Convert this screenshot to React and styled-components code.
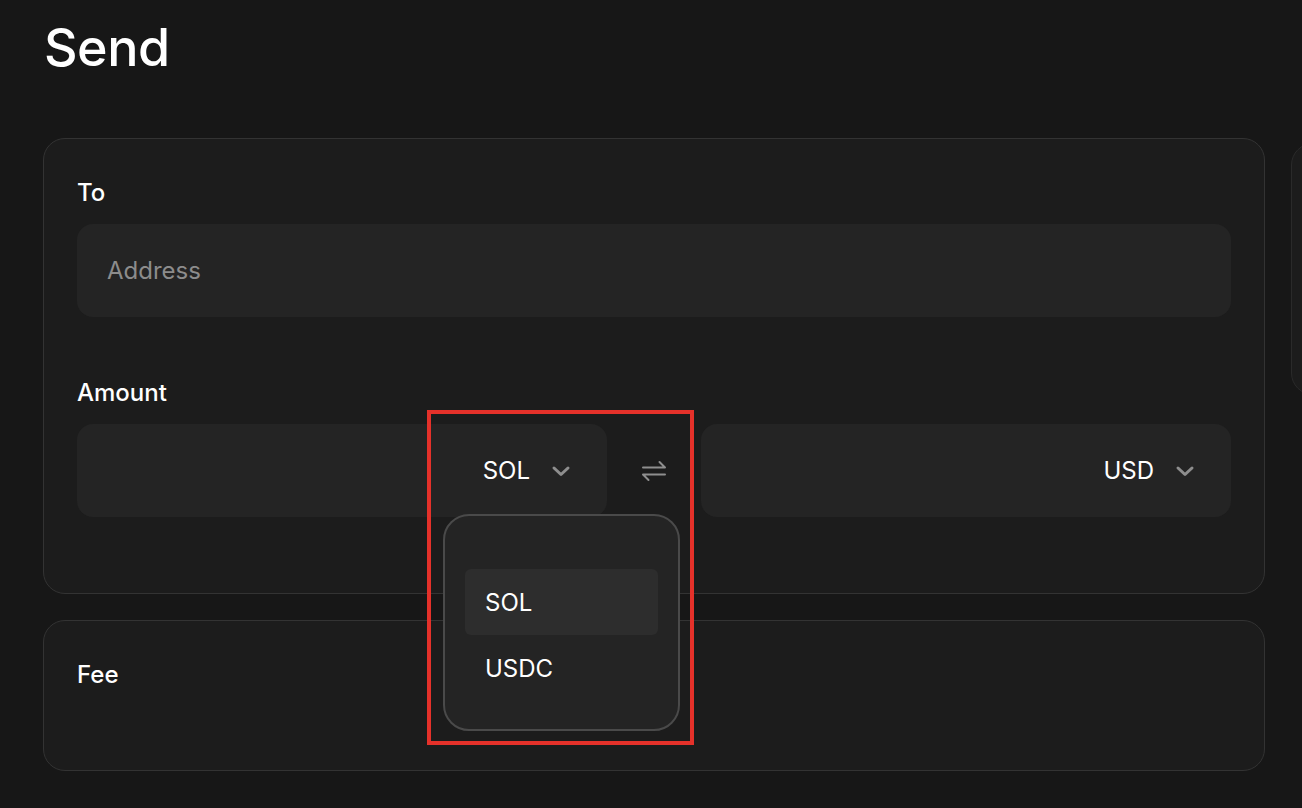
import styled, { createGlobalStyle } from "styled-components";

const GlobalStyle = createGlobalStyle`
  html, body {
    margin: 0;
    background: #171717;
    overflow: hidden;
  }
  body {
    font-family: Inter, "Noto Sans", "Liberation Sans", sans-serif;
    color: #ffffff;
  }
`;

const Page = styled.div`
  width: 1302px;
  height: 808px;
  padding: 22px 0 0 44px;
  box-sizing: border-box;
  overflow: hidden;
`;

const Heading = styled.h1`
  margin: 0;
  font-size: 52px;
  line-height: 52px;
  font-weight: 500;
  letter-spacing: -0.5px;
`;

const Columns = styled.div`
  display: grid;
  grid-template-columns: 1222px 400px;
  gap: 26px;
  margin-top: 64px;
  margin-left: -1px;
  align-items: start;
`;

const Stack = styled.div`
  display: flex;
  flex-direction: column;
  gap: 26px;
`;

const Card = styled.section`
  background: #1c1c1c;
  border: 1px solid #333333;
  border-radius: 22px;
  padding: 41px 33px ${(p) => p.$bottom || 76}px;
  box-sizing: border-box;
  min-height: ${(p) => p.$minHeight || 0}px;
`;

const SideCard = styled(Card)`
  margin-top: 5px;
  height: 252px;
  border-color: #2a2a2a;
`;

const Label = styled.div`
  font-size: 24px;
  line-height: 26px;
  font-weight: 500;
  margin-bottom: 18px;
`;

const Field = styled.div`
  display: flex;
  flex-direction: column;
  & + & {
    margin-top: 63px;
  }
`;

const Input = styled.div`
  height: 93px;
  border-radius: 16px;
  background: #242424;
  display: flex;
  align-items: center;
  padding: 0 30px;
  font-size: 24px;
  color: #8c8c8c;
`;

const AmountRow = styled.div`
  position: relative;
  display: grid;
  grid-template-columns: 530px 94px 1fr;
`;

const AmountBox = styled(Input)`
  justify-content: flex-end;
  padding: 0 36px 0 30px;
  color: #ffffff;
  gap: 21px;
`;

const SwapSlot = styled.div`
  display: flex;
  align-items: center;
  justify-content: center;
  padding-right: 1px;
`;

const Dropdown = styled.div`
  position: absolute;
  left: 366px;
  top: 90px;
  width: 237px;
  box-sizing: border-box;
  background: #242424;
  border: 2px solid #4a4a4a;
  border-radius: 26px;
  padding: 53px 20px 28px;
  display: flex;
  flex-direction: column;
  z-index: 2;
`;

const Option = styled.div`
  height: 66px;
  display: flex;
  align-items: center;
  padding: 0 20px;
  border-radius: 6px;
  font-size: 24px;
  background: ${(p) => (p.$active ? "#2d2d2d" : "transparent")};
`;

const Highlight = styled.div`
  position: absolute;
  left: 350px;
  top: -14px;
  width: 267px;
  height: 335px;
  box-sizing: border-box;
  border: 4px solid #e5312a;
  z-index: 3;
  pointer-events: none;
`;

const Chevron = () => (
  <svg width="20" height="12" viewBox="0 0 20 12" fill="none">
    <path
      d="M3 3l7 6.5L17 3"
      stroke="#8e8e8e"
      strokeWidth="3"
      strokeLinecap="round"
      strokeLinejoin="round"
    />
  </svg>
);

const SwapIcon = () => (
  <svg width="28" height="26" viewBox="0 0 28 26" fill="none">
    <path
      d="M3 9.5h22l-5.5-5.5M25 16.5H3l5.5 5.5"
      stroke="#8e8e8e"
      strokeWidth="2"
      strokeLinecap="round"
      strokeLinejoin="round"
    />
  </svg>
);

export default function App() {
  return (
    <>
      <GlobalStyle />
      <Page>
        <Heading>Send</Heading>
        <Columns>
          <Stack>
            <Card>
              <Field>
                <Label>To</Label>
                <Input>Address</Input>
              </Field>
              <Field>
                <Label>Amount</Label>
                <AmountRow>
                  <AmountBox>
                    SOL
                    <Chevron />
                  </AmountBox>
                  <SwapSlot>
                    <SwapIcon />
                  </SwapSlot>
                  <AmountBox>
                    USD
                    <Chevron />
                  </AmountBox>
                  <Dropdown>
                    <Option $active>SOL</Option>
                    <Option>USDC</Option>
                  </Dropdown>
                  <Highlight />
                </AmountRow>
              </Field>
            </Card>
            <Card $minHeight={151} $bottom={40}>
              <Label>Fee</Label>
            </Card>
          </Stack>
          <SideCard />
        </Columns>
      </Page>
    </>
  );
}
